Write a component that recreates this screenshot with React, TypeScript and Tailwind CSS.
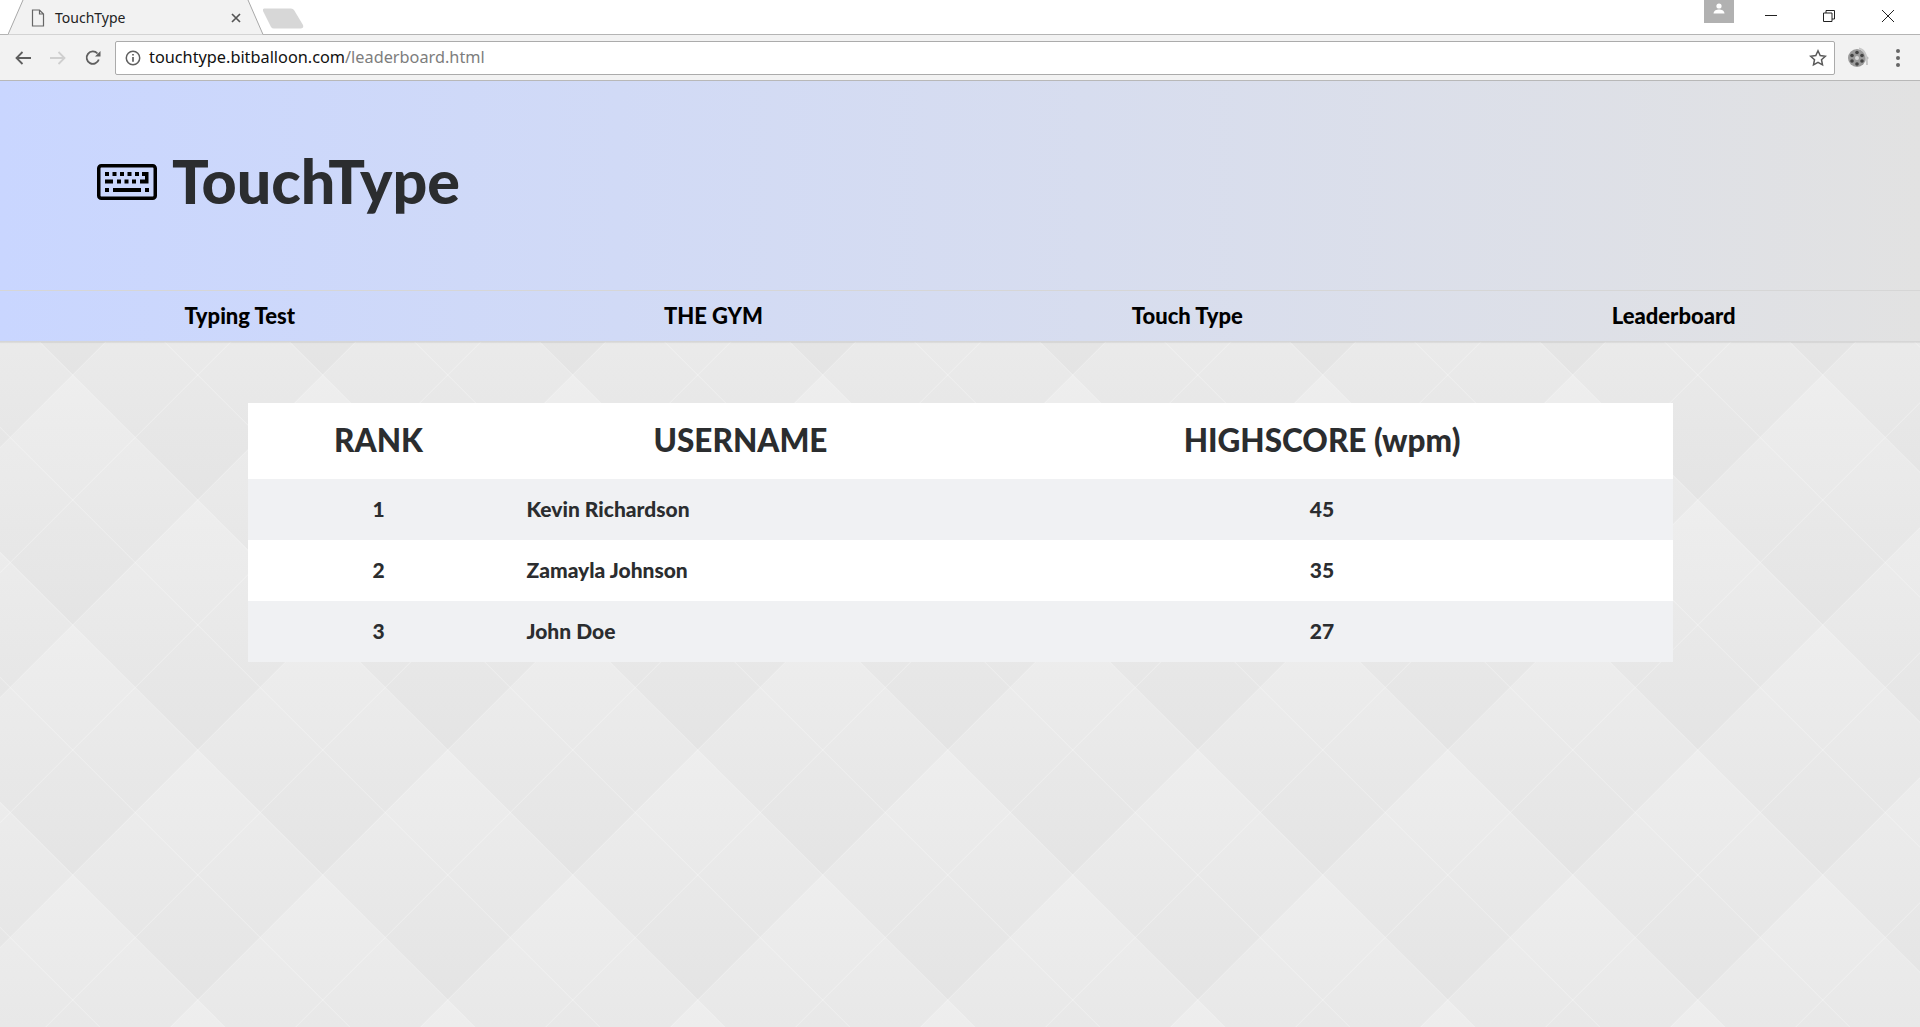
import React from "react";

function Background() {
  const lines: number[] = [-3, -2, -1, 0, 1, 2, 3, 4];
  return (
    <svg className="absolute inset-0 w-full h-full" aria-hidden="true">
      <defs>
        <linearGradient id="dia" x1="0" y1="0" x2="0" y2="1">
          <stop offset="0" stopColor="#eeeeee" />
          <stop offset="1" stopColor="#e4e4e4" />
        </linearGradient>
        <pattern id="quilt" x="72.7" y="125" width="250" height="250" patternUnits="userSpaceOnUse">
          <rect width="250" height="250" fill="#e9e9e9" />
          <polygon points="0,0 125,125 0,250 -125,125" fill="url(#dia)" />
          <polygon points="250,0 375,125 250,250 125,125" fill="url(#dia)" />
          <polygon points="125,125 250,250 125,375 0,250" fill="url(#dia)" />
          <polygon points="125,-125 250,0 125,125 0,0" fill="url(#dia)" />
          {lines.map((k) => (
            <g key={k} stroke="#ffffff" strokeOpacity="0.32" strokeWidth="1">
              <line x1={k * 125} y1="0" x2={k * 125 + 250} y2="250" />
              <line x1={k * 125} y1="0" x2={k * 125 - 250} y2="250" />
            </g>
          ))}
        </pattern>
      </defs>
      <rect width="100%" height="100%" fill="url(#quilt)" />
    </svg>
  );
}

function KeyboardIcon() {
  return (
    <svg width="60" height="36" viewBox="0 0 60 36" fill="#000" className="shrink-0 mt-[2px]">
      <rect x="1.750" y="1.750" width="56.500" height="32.500" rx="2.500" fill="none" stroke="#000" strokeWidth="3.500" />
      {[8, 15.5, 23, 30.5, 38, 45].map((x) => (
        <rect key={x} x={x} y="8" width="4" height="4" />
      ))}
      <rect x="8" y="15.5" width="8" height="4" />
      {[20, 27.5, 35].map((x) => (
        <rect key={x} x={x} y="15.5" width="4" height="4" />
      ))}
      <path d="M43 15.5h5V8h3.500v11.500H43z" />
      <rect x="8" y="24" width="4" height="4" />
      <rect x="16" y="24" width="28" height="4" />
      <rect x="48" y="24" width="4" height="4" />
    </svg>
  );
}

function BrowserChrome() {
  return (
    <div className="shrink-0 font-['Noto_Sans',sans-serif]">
      <div className="relative h-[35px] bg-white border-b border-[#b4b4b4] flex items-start">
        <div className="relative w-[260px] h-[35px] shrink-0 ml-[8px] pl-[22px] pr-[20px] flex items-center">
          <svg className="absolute left-0 top-0" width="256" height="35" viewBox="0 0 256 35">
            <path d="M0 34.500 L15 0 H240 L255 34.500 Z" fill="#f2f2f2" />
            <path d="M0 34.500 L15 0 M240 0 L255 34.500" fill="none" stroke="#a8a8a8" strokeWidth="1" />
          </svg>
          <svg className="relative ml-[1px]" width="14" height="18" viewBox="0 0 14 18" fill="none" stroke="#666" strokeWidth="1.200">
            <path d="M1.500 1h7l4 4v12h-11zM8.500 1v4h4" />
          </svg>
          <span className="relative ml-[10px] text-[14px] text-[#222] leading-none">TouchType</span>
          <svg className="relative ml-[106px]" width="10" height="10" viewBox="0 0 10 10" stroke="#555" strokeWidth="1.700">
            <path d="M1 1l8 8M9 1l-8 8" />
          </svg>
        </div>
        <svg className="-ml-[6px] mt-[8px]" width="42" height="21" viewBox="0 0 42 21">
          <path d="M2 0.500H29Q31 0.500 32 2L41 17Q42 20 39 20.500H12Q10 20.500 9 19L1 3Q0.500 0.500 2 0.500Z" fill="#d7d7d7" />
        </svg>
        <div className="ml-auto flex items-start">
          <div className="w-[30px] h-[23px] bg-[#b1b1b1] flex justify-center pt-[3px] mr-[31px]">
            <svg width="12" height="11" viewBox="0 0 12 11" fill="#fff">
              <circle cx="6" cy="3" r="2.600" />
              <path d="M0.500 10.500C1 7.500 3.500 6.600 6 6.600s5 .9 5.500 3.900z" />
            </svg>
          </div>
          <div className="w-[12px] h-[1px] bg-[#222] mt-[15px] mr-[46px]" />
          <svg className="mt-[10px] mr-[47px]" width="12" height="12" viewBox="0 0 12 12" fill="none" stroke="#222" strokeWidth="1">
            <path d="M.5 3h8.500v8.500H.5zM3 3V.5h8.500V9H9" />
          </svg>
          <svg className="mt-[10px] mr-[26px]" width="12" height="12" viewBox="0 0 12 12" stroke="#222" strokeWidth="1">
            <path d="M0 0l12 12M12 0L0 12" />
          </svg>
        </div>
      </div>
      <div className="h-[46px] bg-[#f2f2f2] border-b border-[#b8b8b8] flex items-center">
        <svg className="ml-[15px]" width="16" height="14" viewBox="0 0 16 14" fill="none" stroke="#5f5f5f" strokeWidth="1.800">
          <path d="M16 7H1.500M7.500 1L1.500 7l6 6" />
        </svg>
        <svg className="ml-[19px]" width="16" height="14" viewBox="0 0 16 14" fill="none" stroke="#cfcfcf" strokeWidth="1.800">
          <path d="M0 7h14.500M8.500 1l6 6-6 6" />
        </svg>
        <svg className="ml-[19px]" width="16" height="16" viewBox="0 0 16 16" fill="none" stroke="#5f5f5f" strokeWidth="1.800">
          <path d="M13.800 9.500A6.200 6.200 0 1 1 12.500 3.500" />
          <path d="M15.500 1v5.500H10z" fill="#5f5f5f" stroke="none" />
        </svg>
        <div className="ml-[14px] w-[1720px] h-[34px] shrink-0 bg-white border border-[#ababab] rounded-[2px] flex items-center pl-[9px] pr-[7px]">
          <svg width="16" height="16" viewBox="0 0 15 15" fill="none" stroke="#5f5f5f" strokeWidth="1.400">
            <circle cx="7.500" cy="7.500" r="6.300" />
            <path d="M7.500 6.500v4.500M7.500 3.700v1.500" strokeWidth="1.600" />
          </svg>
          <span className="ml-[8px] text-[16.3px] leading-none text-[#111]">
            touchtype.bitballoon.com<span className="text-[#7d7d7d]">/leaderboard.html</span>
          </span>
          <svg className="ml-auto" width="18" height="18" viewBox="0 0 18 18" fill="none" stroke="#5a5a5a" strokeWidth="1.500">
            <path d="M9 1.800l2.200 4.800 5.100.6-3.800 3.500 1 5.100L9 13.300l-4.500 2.500 1-5.100L1.700 7.200l5.100-.6z" />
          </svg>
        </div>
        <svg className="ml-[12px]" width="22" height="22" viewBox="0 0 22 22">
          <circle cx="10" cy="11" r="9" fill="#9a9a9a" />
          <circle cx="20" cy="11" r="1.500" fill="#b5b5b5" />
          <path d="M12 1.500Q20 3 20 18" fill="none" stroke="#c8c8c8" strokeWidth="2" />
          <circle cx="10" cy="11" r="2" fill="#d9d9d9" />
          {[[10, 5.500], [15, 8.500], [15, 14], [10, 17], [5, 14], [5, 8.500]].map(([x, y]) => (
            <circle key={`${x}-${y}`} cx={x} cy={y} r="1.800" fill="#444" />
          ))}
        </svg>
        <div className="ml-[27px] flex flex-col gap-[3px]">
          <span className="w-[4px] h-[4px] rounded-full bg-[#666]" />
          <span className="w-[4px] h-[4px] rounded-full bg-[#666]" />
          <span className="w-[4px] h-[4px] rounded-full bg-[#666]" />
        </div>
      </div>
    </div>
  );
}

const rows = [
  { rank: 1, name: "Kevin Richardson", score: 45, cls: "bg-[#f0f1f3]" },
  { rank: 2, name: "Zamayla Johnson", score: 35, cls: "bg-white" },
  { rank: 3, name: "John Doe", score: 27, cls: "bg-[#f0f1f3]" },
];

export default function App() {
  return (
    <div className="relative w-full h-[1027px] overflow-hidden flex flex-col font-['Lato',sans-serif]">
      <Background />
      <div className="relative flex flex-col">
        <BrowserChrome />
        <div className="bg-gradient-to-r from-[#c9d6ff] to-[#e2e2e2]">
          <header className="h-[209px] flex items-center pl-[97px] gap-[15px] pb-[10px]">
            <KeyboardIcon />
            <h1 className="text-[61px] leading-none font-black text-[#2b2d2f]">TouchType</h1>
          </header>
          <nav className="h-[52px] border-y border-[#d6d6d6] shadow-[0_1px_1px_rgba(0,0,0,0.06)] flex items-center justify-around text-[22px] font-black text-black pb-[1px]">
            <a>Typing Test</a>
            <a>THE GYM</a>
            <a>Touch Type</a>
            <a>Leaderboard</a>
          </nav>
        </div>
      </div>
      <main className="relative pt-[61px]">
        <table className="w-[1425px] mx-auto table-fixed border-collapse text-[#2b2d2f] font-black">
          <colgroup>
            <col className="w-[262px]" />
            <col className="w-[462px]" />
            <col />
          </colgroup>
          <thead>
            <tr className="bg-white h-[76px] text-[31.5px]">
              <th className="font-black pb-[1px]">RANK</th>
              <th className="font-black pb-[1px]">USERNAME</th>
              <th className="font-black pb-[1px]">HIGHSCORE (wpm)</th>
            </tr>
          </thead>
          <tbody className="text-[21px]">
            {rows.map((r) => (
              <tr key={r.rank} className={`${r.cls} h-[61px]`}>
                <td className="text-center pb-[1px]">{r.rank}</td>
                <td className="pl-[17px] pb-[1px]">{r.name}</td>
                <td className="text-center pb-[1px]">{r.score}</td>
              </tr>
            ))}
          </tbody>
        </table>
      </main>
    </div>
  );
}
